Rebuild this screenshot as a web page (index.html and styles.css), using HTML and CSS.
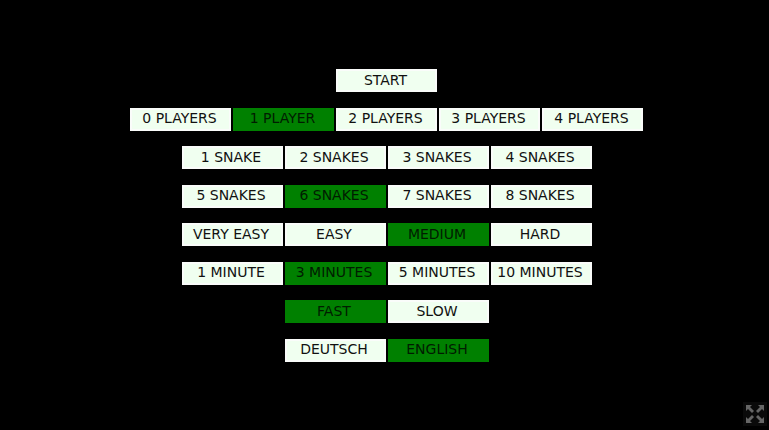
FILE: index.html
```html
<!DOCTYPE html>
<html lang="en">
<head>
  <meta charset="utf-8">
  <meta name="viewport" content="width=device-width, initial-scale=1.0">
  <title>Snakes</title>
  <link rel="stylesheet" href="styles.css">
</head>
<body>

  <main class="menu">
    <div class="row">
      <button type="button">START</button>
    </div>

    <!-- Human players -->
    <div class="row">
      <button type="button">0 PLAYERS</button>
      <button type="button" class="selected">1 PLAYER</button>
      <button type="button">2 PLAYERS</button>
      <button type="button">3 PLAYERS</button>
      <button type="button">4 PLAYERS</button>
    </div>

    <!-- Number of snakes -->
    <div class="row">
      <button type="button">1 SNAKE</button>
      <button type="button">2 SNAKES</button>
      <button type="button">3 SNAKES</button>
      <button type="button">4 SNAKES</button>
    </div>
    <div class="row">
      <button type="button">5 SNAKES</button>
      <button type="button" class="selected">6 SNAKES</button>
      <button type="button">7 SNAKES</button>
      <button type="button">8 SNAKES</button>
    </div>

    <!-- Difficulty -->
    <div class="row">
      <button type="button">VERY EASY</button>
      <button type="button">EASY</button>
      <button type="button" class="selected">MEDIUM</button>
      <button type="button">HARD</button>
    </div>

    <!-- Game length -->
    <div class="row">
      <button type="button">1 MINUTE</button>
      <button type="button" class="selected">3 MINUTES</button>
      <button type="button">5 MINUTES</button>
      <button type="button">10 MINUTES</button>
    </div>

    <!-- Speed -->
    <div class="row">
      <button type="button" class="selected">FAST</button>
      <button type="button">SLOW</button>
    </div>

    <!-- Language -->
    <div class="row">
      <button type="button">DEUTSCH</button>
      <button type="button" class="selected">ENGLISH</button>
    </div>
  </main>

  <button type="button" class="fullscreen" aria-label="Fullscreen">
    <svg viewBox="0 0 24 24" width="24" height="24" aria-hidden="true">
      <path d="M3 3h6L7 5l4 4-2 2-4-4-2 2zM21 3v6l-2-2-4 4-2-2 4-4-2-2zM3 21v-6l2 2 4-4 2 2-4 4 2 2zM21 21h-6l2-2-4-4 2-2 4 4 2-2z"/>
    </svg>
  </button>

</body>
</html>
```

FILE: styles.css
```css
* {
  box-sizing: border-box;
}

body {
  margin: 0;
  background-color: #000;
  font-family: "DejaVu Sans", sans-serif;
}

.menu {
  display: flex;
  flex-direction: column;
  justify-content: space-between;
  gap: 8px;
  min-height: 100vh;
  padding: 69px 0 68px 4px;
}

.row {
  display: flex;
  justify-content: center;
  gap: 2px;
}

.row button {
  width: 101px;
  height: 23px;
  padding: 0 2px 2px 0;
  border: 2px solid #fafcfa;
  background-color: #f0fff0;
  color: #111;
  font-family: inherit;
  font-size: 14px;
  line-height: 16px;
  white-space: nowrap;
  cursor: pointer;
}

.row button.selected {
  border-color: #008000;
  background-color: #008000;
  color: #001c00;
}

.fullscreen {
  position: fixed;
  right: 2px;
  bottom: 4px;
  display: flex;
  padding: 0;
  border: none;
  background-color: #0a0a0a;
  cursor: pointer;
}

.fullscreen path {
  fill: #666;
}
```
